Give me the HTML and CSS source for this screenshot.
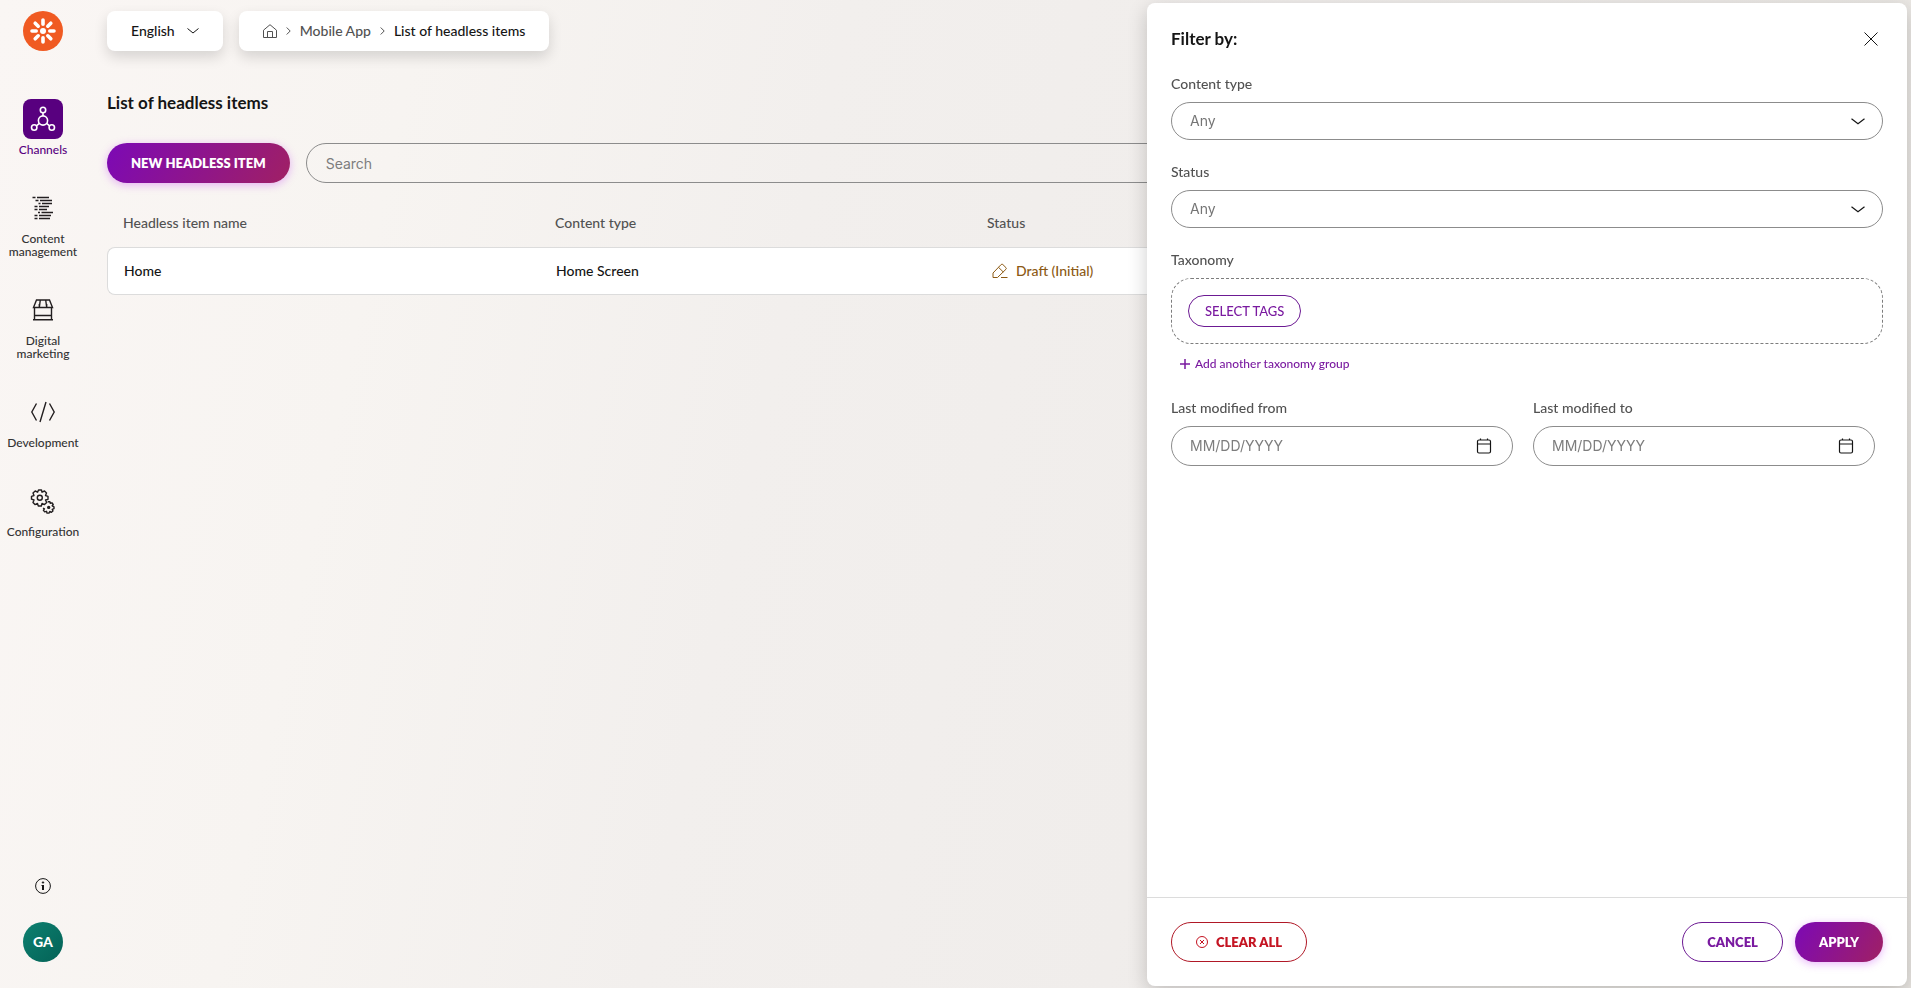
FILE: index.html
```html
<!DOCTYPE html>
<html lang="en">
<head>
<meta charset="utf-8">
<meta name="viewport" content="width=device-width, initial-scale=1">
<title>List of headless items</title>
<link rel="stylesheet" href="styles.css">
</head>
<body>
<div class="app">
  <aside class="sidebar">
    <a class="logo" href="#" aria-label="Dashboard">
      <svg width="40" height="40" viewBox="0 0 40 40">
        <circle cx="20" cy="20" r="20" fill="#f05a22"/>
        <circle cx="20" cy="20" r="3" fill="#fff"/>
        <g stroke="#fff" stroke-width="3.6" stroke-linecap="round">
          <path d="M20 9v4.200M20 26.800V31M9 20h4.200M26.800 20H31"/>
          <path d="M12.200 12.200l3 3M24.800 24.800l3 3M12.200 27.800l3-3M24.800 15.200l3-3"/>
        </g>
      </svg>
    </a>
    <nav class="nav">
      <a class="nav-item active" href="#">
        <span class="nav-icon">
          <svg width="26" height="26" viewBox="0 0 26 26" fill="none" stroke="#fff" stroke-width="1.600">
            <circle cx="13" cy="14.500" r="4.600"/><circle cx="13" cy="4" r="2.700"/><circle cx="4.200" cy="21.500" r="2.700"/><circle cx="21.800" cy="21.500" r="2.700"/>
            <path d="M13 6.700v3.200M9.400 17.400l-3 2.400M16.600 17.400l3 2.400"/>
          </svg>
        </span>
        <span class="nav-label">Channels</span>
      </a>
      <a class="nav-item" href="#">
        <span class="nav-icon">
          <svg width="24" height="24" viewBox="0 0 24 24" fill="none" stroke="#231f20" stroke-width="1.300">
            <path d="M1.500 1.500h3M6 1.500h12M4.500 4.500h3M9 4.500h12M7.500 7.500h2M11 7.500h10M3.500 10.500h3M8 10.500h10M3.500 13.500h3M8 13.500h8M7 16.500h2M10.500 16.500h11.500M3.500 19.500h3M8 19.500h12M3.500 22.500h3M8 22.500h11"/>
          </svg>
        </span>
        <span class="nav-label">Content management</span>
      </a>
      <a class="nav-item" href="#">
        <span class="nav-icon">
          <svg width="24" height="24" viewBox="0 0 24 24" fill="none" stroke="#231f20" stroke-width="1.400">
            <path d="M5.500 2h13l3 7.500h-19zM9.300 2L8.300 9.500M14.700 2l1 7.500M8.300 6v3.500M15.700 6v3.500M3.500 9.500V21.500M20.500 9.500V21.500M3.500 17.500h17M2 21.700h20"/>
          </svg>
        </span>
        <span class="nav-label">Digital marketing</span>
      </a>
      <a class="nav-item" href="#">
        <span class="nav-icon">
          <svg width="26" height="24" viewBox="0 0 26 24" fill="none" stroke="#231f20" stroke-width="1.400">
            <path d="M6.500 3.500L1.800 12l4.700 8.500M19.500 3.500l4.700 8.500-4.700 8.500M16 2l-6 20"/>
          </svg>
        </span>
        <span class="nav-label">Development</span>
      </a>
      <a class="nav-item" href="#">
        <span class="nav-icon">
          <svg width="26" height="26" viewBox="0 0 26 26" fill="none" stroke="#231f20" stroke-width="1.400" stroke-linejoin="round">
            <path d="M8.500 2L11.500 2L12 4.200L14.500 3L16.500 5L15.500 7.500L18 8.300V11.300L15.500 12L16.700 14.500L14.500 16.600L12 15.500L11.300 18H8.300L7.500 15.500L5 16.600L3 14.500L4 12L1.500 11.200V8.300L4 7.500L3 5L5.200 3L7.600 4.200Z"/>
            <circle cx="9.800" cy="9.800" r="2.500"/>
            <path d="M17.700 13.700h2.200l.4 1.600 1.600-.5 1.300 1.700-1 1.300 1.800 1v1.800l-1.800.7.700 1.600-1.500 1.400-1.600-.8-.8 1.600h-2l-.5-1.800-1.800.6-1.300-1.600 1-1.500-1.400-.7"/>
            <circle cx="18.700" cy="19.400" r="1" fill="#231f20"/>
          </svg>
        </span>
        <span class="nav-label">Configuration</span>
      </a>
    </nav>
    <div class="sidebar-bottom">
      <button class="info" type="button" aria-label="Information">
        <svg width="16" height="16" viewBox="0 0 16 16" fill="none" stroke="#151515">
          <circle cx="8" cy="8" r="7.400"/><path d="M8 7v5" stroke-width="2"/><path d="M6.500 7.500H8"/><circle cx="8" cy="4.500" r=".7" fill="#151515"/>
        </svg>
      </button>
      <button class="avatar" type="button">GA</button>
    </div>
  </aside>

  <main class="main">
    <header class="topbar">
      <button class="card language" type="button" aria-haspopup="listbox">English
        <svg width="12" height="6" viewBox="0 0 12 6" fill="none" stroke="#151515"><path d="M.5.5L6 5 11.500.5"/></svg>
      </button>
      <nav class="card breadcrumb" aria-label="Breadcrumb">
        <a href="#" aria-label="Home">
          <svg width="14" height="14" viewBox="0 0 14 14" fill="none" stroke="#525252"><path d="M.5 13.500V6.200L7 .7l6.500 5.500v7.300zM4.500 13.500v-6h5v6"/></svg>
        </a>
        <svg width="5" height="8" viewBox="0 0 5 8" fill="none" stroke="#525252"><path d="M.7.500L4.200 4 .7 7.500"/></svg>
        <a href="#">Mobile App</a>
        <svg width="5" height="8" viewBox="0 0 5 8" fill="none" stroke="#525252"><path d="M.7.500L4.200 4 .7 7.500"/></svg>
        <a class="current" href="#" aria-current="page">List of headless items</a>
      </nav>
    </header>

    <h1 class="title">List of headless items</h1>

    <div class="toolbar">
      <button class="btn primary" type="button">NEW HEADLESS ITEM</button>
      <input class="search" type="search" placeholder="Search" aria-label="Search">
    </div>

    <table class="listing">
      <thead>
        <tr><th>Headless item name</th><th>Content type</th><th>Status</th></tr>
      </thead>
      <tbody>
        <tr>
          <td>Home</td>
          <td>Home Screen</td>
          <td>
            <span class="draft">
              <svg width="16" height="16" viewBox="0 0 16 16" fill="none" stroke="#8c5a14"><path d="M1 10L9.200 1.500Q10 .8 10.800 1.500L14 4.700Q14.700 5.400 14 6.200L5.500 14.500H1zM6.500 4.300L11.300 9M9 14.500h6.500"/></svg>
              Draft (Initial)
            </span>
          </td>
        </tr>
      </tbody>
    </table>
  </main>
</div>

<form class="panel" aria-labelledby="filter-title">
  <div class="panel-body">
    <div class="panel-head">
      <h2 class="title" id="filter-title">Filter by:</h2>
      <button class="close" type="button" aria-label="Close">
        <svg width="14" height="14" viewBox="0 0 14 14" fill="none" stroke="#151515"><path d="M.5.5l13 13M13.500.5l-13 13"/></svg>
      </button>
    </div>

    <div class="fields">
      <div class="field">
        <label for="content-type">Content type</label>
        <div class="select">
          <select id="content-type"><option>Any</option></select>
          <svg width="14" height="7" viewBox="0 0 14 7" fill="none" stroke="#151515" stroke-width="1.200"><path d="M.5.800L7 5.800 13.500.8"/></svg>
        </div>
      </div>
      <div class="field">
        <label for="status">Status</label>
        <div class="select">
          <select id="status"><option>Any</option></select>
          <svg width="14" height="7" viewBox="0 0 14 7" fill="none" stroke="#151515" stroke-width="1.200"><path d="M.5.800L7 5.800 13.500.8"/></svg>
        </div>
      </div>
      <div class="field">
        <label for="tags">Taxonomy</label>
        <div class="tags">
          <button class="tag-button" id="tags" type="button">SELECT TAGS</button>
        </div>
        <button class="add" type="button">
          <svg width="10" height="10" viewBox="0 0 10 10" fill="none" stroke="#7a1aa0" stroke-width="1.500"><path d="M5 0v10M0 5h10"/></svg>
          Add another taxonomy group
        </button>
      </div>
      <div class="dates">
        <div class="field">
          <label for="from">Last modified from</label>
          <div class="date">
            <input id="from" type="text" placeholder="MM/DD/YYYY">
            <button type="button" aria-label="Open calendar">
              <svg width="16" height="16" viewBox="0 0 16 16" fill="none" stroke="#151515" stroke-width="1.200"><rect x="1.500" y="2" width="13" height="13" rx="1.500"/><path d="M1.500 6h13M4.500.500V2M11.500.500V2"/></svg>
            </button>
          </div>
        </div>
        <div class="field">
          <label for="to">Last modified to</label>
          <div class="date">
            <input id="to" type="text" placeholder="MM/DD/YYYY">
            <button type="button" aria-label="Open calendar">
              <svg width="16" height="16" viewBox="0 0 16 16" fill="none" stroke="#151515" stroke-width="1.200"><rect x="1.500" y="2" width="13" height="13" rx="1.500"/><path d="M1.500 6h13M4.500.500V2M11.500.500V2"/></svg>
            </button>
          </div>
        </div>
      </div>
    </div>
  </div>
  <footer class="panel-footer">
    <button class="btn danger" type="reset">
      <svg width="12" height="12" viewBox="0 0 12 12" fill="none" stroke="#c41422"><circle cx="6" cy="6" r="5.500"/><path d="M4 4l4 4M8 4L4 8"/></svg>
      CLEAR ALL
    </button>
    <div class="actions">
      <button class="btn secondary" type="button">CANCEL</button>
      <button class="btn primary" type="submit">APPLY</button>
    </div>
  </footer>
</form>
</body>
</html>
```

FILE: styles.css
```css
* {
  box-sizing: border-box;
}

body {
  margin: 0;
  font: 500 14px/20px Lato, "Liberation Sans", sans-serif;
  color: #151515;
  background: linear-gradient(102deg, #faf6f4 0%, #f7f4f1 20%, #f2efed 40%, #f0edeb 62%, #e8e5e1 100%);
}

button,
input,
select {
  font: inherit;
  color: inherit;
  margin: 0;
}

button {
  padding: 0;
  border: 0;
  background: none;
  cursor: pointer;
}

a {
  color: inherit;
  text-decoration: none;
}

svg {
  display: block;
  flex: none;
}

.app {
  display: flex;
  min-height: 100vh;
}

/* Sidebar */
.sidebar {
  display: flex;
  flex-direction: column;
  align-items: center;
  flex: none;
  width: 86px;
  padding: 11px 0 26px;
}

.nav {
  display: flex;
  flex-direction: column;
  gap: 32px;
  margin-top: 48px;
}

.nav-item {
  display: flex;
  flex-direction: column;
  align-items: center;
  gap: 4px;
  width: 84px;
  color: #333;
}

.nav-icon {
  display: grid;
  place-items: center;
  width: 40px;
  height: 40px;
  border-radius: 8px;
}

.nav-label {
  font-size: 12px;
  line-height: 13px;
  text-align: center;
}

.active {
  color: #58007f;
}

.active .nav-icon {
  background: #58007f;
}

.sidebar-bottom {
  display: flex;
  flex-direction: column;
  align-items: center;
  gap: 28px;
  margin-top: auto;
}

.avatar {
  width: 40px;
  height: 40px;
  border-radius: 50%;
  color: #fff;
  font-weight: 900;
  background: linear-gradient(135deg, #0d8070, #046256);
}

/* Main area */
.main {
  flex: 1;
  min-width: 0;
  padding: 11px 20px 24px 21px;
}

.topbar {
  display: flex;
  gap: 16px;
}

.card {
  display: flex;
  align-items: center;
  height: 40px;
  padding: 0 24px;
  border-radius: 8px;
  background: #fff;
  box-shadow: 0 6px 14px rgba(0, 0, 0, 0.14);
}

.language {
  gap: 12px;
}

.breadcrumb {
  gap: 9px;
  color: #525252;
}

.current {
  color: #151515;
}

.title {
  margin: 0;
  font-size: 17px;
  font-weight: 700;
  line-height: 24px;
}

.main .title {
  margin-top: 40px;
}

.toolbar {
  display: flex;
  gap: 16px;
  margin-top: 28px;
}

.btn {
  display: flex;
  align-items: center;
  justify-content: center;
  gap: 8px;
  flex: none;
  height: 40px;
  padding: 0 24px;
  border-radius: 20px;
  font-size: 13px;
  font-weight: 800;
}

.primary {
  color: #fff;
  background: linear-gradient(120deg, #7c09b5, #a02064);
  box-shadow: 0 2px 8px rgba(190, 50, 240, 0.35);
}

.secondary {
  border: 1px solid #6c1a93;
  color: #7a1aa0;
}

.danger {
  border: 1px solid #b01826;
  color: #c41422;
}

.search {
  flex: 1;
  min-width: 0;
  height: 40px;
  padding: 0 19px;
  border: 1px solid #8c8c8c;
  border-radius: 20px;
  background: none;
  font-family: Inter, sans-serif;
  font-weight: 400;
}

::placeholder {
  color: #7d7d7d;
  opacity: 1;
}

.listing {
  width: 100%;
  margin-top: 16px;
  border-collapse: separate;
  border-spacing: 0;
  table-layout: fixed;
}

.listing th {
  height: 48px;
  padding: 0 16px;
  color: #525252;
  font-weight: 500;
  text-align: left;
}

.listing th:nth-child(-n + 2) {
  width: 432px;
}

.listing td {
  height: 48px;
  padding: 0 17px;
  border: solid #dcdcdc;
  border-width: 1px 0;
  background: #fff;
}

.listing td:first-child {
  padding-left: 16px;
  border-left-width: 1px;
  border-radius: 8px 0 0 8px;
}

.listing td:last-child {
  padding-left: 21px;
  border-right-width: 1px;
  border-radius: 0 8px 8px 0;
}

.draft {
  display: flex;
  align-items: center;
  gap: 8px;
  color: #8c5a14;
}

/* Filter panel */
.panel {
  position: fixed;
  top: 3px;
  right: 4px;
  bottom: 2px;
  display: flex;
  flex-direction: column;
  width: 760px;
  max-width: calc(100% - 8px);
  border-radius: 8px;
  background: #fff;
  box-shadow: 0 6px 20px rgba(0, 0, 0, 0.2);
}

.panel-body {
  display: flex;
  flex-direction: column;
  flex: 1;
  gap: 23px;
  padding: 24px;
  overflow: auto;
}

.panel-head {
  display: flex;
  align-items: center;
  justify-content: space-between;
}

.close {
  display: grid;
  place-items: center;
  width: 24px;
  height: 24px;
}

.fields {
  display: flex;
  flex-direction: column;
  gap: 22px;
}

.field {
  display: flex;
  flex-direction: column;
  align-items: stretch;
  gap: 8px;
  color: #525252;
}

.select {
  position: relative;
}

.select select {
  display: block;
  width: 100%;
  height: 38px;
  padding: 0 48px 0 18px;
  border: 1px solid #8c8c8c;
  border-radius: 19px;
  background: #fff;
  color: #757575;
  font-family: Inter, sans-serif;
  font-weight: 400;
  appearance: none;
}

.select svg {
  position: absolute;
  top: 16px;
  right: 18px;
  pointer-events: none;
}

.tags {
  padding: 16px;
  border: 1px dashed #7d7d7d;
  border-radius: 20px;
}

.tag-button {
  display: block;
  height: 32px;
  padding: 0 16px;
  border: 1px solid #6c1a93;
  border-radius: 16px;
  color: #7a1aa0;
  font-size: 13px;
}

.add {
  display: flex;
  align-items: center;
  align-self: flex-start;
  gap: 5px;
  padding: 2px 0 0 9px;
  color: #7a1aa0;
  font-size: 12px;
}

.dates {
  display: grid;
  grid-template-columns: 1fr 1fr;
  gap: 20px;
  margin: 2px 8px 0 0;
}

.date {
  display: flex;
  align-items: center;
  height: 40px;
  padding: 0 20px 0 18px;
  border: 1px solid #8c8c8c;
  border-radius: 20px;
}

.date input {
  flex: 1;
  min-width: 0;
  padding: 0;
  border: 0;
  background: none;
  font-family: Inter, sans-serif;
  font-weight: 400;
}

.panel-footer {
  display: flex;
  justify-content: space-between;
  padding: 24px;
  border-top: 1px solid #dcdcdc;
}

.actions {
  display: flex;
  gap: 12px;
}
```
